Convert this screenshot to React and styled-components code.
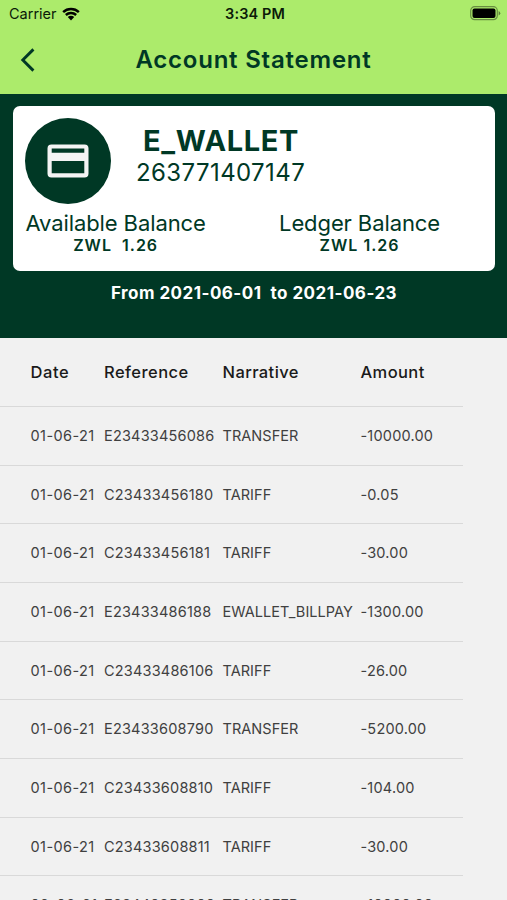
import React from 'react';
import styled, { createGlobalStyle } from 'styled-components';

const transactions = [
  { date: '01-06-21', reference: 'E23433456086', narrative: 'TRANSFER', amount: '-10000.00' },
  { date: '01-06-21', reference: 'C23433456180', narrative: 'TARIFF', amount: '-0.05' },
  { date: '01-06-21', reference: 'C23433456181', narrative: 'TARIFF', amount: '-30.00' },
  { date: '01-06-21', reference: 'E23433486188', narrative: 'EWALLET_BILLPAY', amount: '-1300.00' },
  { date: '01-06-21', reference: 'C23433486106', narrative: 'TARIFF', amount: '-26.00' },
  { date: '01-06-21', reference: 'E23433608790', narrative: 'TRANSFER', amount: '-5200.00' },
  { date: '01-06-21', reference: 'C23433608810', narrative: 'TARIFF', amount: '-104.00' },
  { date: '01-06-21', reference: 'C23433608811', narrative: 'TARIFF', amount: '-30.00' },
  { date: '02-06-21', reference: 'E23440350000', narrative: 'TRANSFER', amount: '-10000.00' },
];

const WifiIcon = () => (
  <svg width="18" height="14" viewBox="0 0 18 14">
    <path d="M0.3 4.2 A12.6 12.6 0 0 1 17.7 4.2 L16 6 A10 10 0 0 0 2 6 Z" />
    <path d="M3 7.1 A8.6 8.6 0 0 1 15 7.1 L13.3 8.9 A6.2 6.2 0 0 0 4.7 8.9 Z" />
    <path d="M5.8 10 A4.6 4.6 0 0 1 12.2 10 L9 13.4 Z" />
  </svg>
);

const BatteryIcon = () => (
  <svg width="31" height="15" viewBox="0 0 31 15">
    <rect x="0.7" y="0.7" width="26.6" height="13" rx="4" fill="none" stroke="#000" strokeOpacity="0.4" strokeWidth="1.2" />
    <rect x="2.5" y="2.5" width="23" height="9.4" rx="2" />
    <path d="M28.6 5 Q30.3 5.8 30.3 7.2 Q30.3 8.6 28.6 9.4 Z" fillOpacity="0.45" />
  </svg>
);

const BackIcon = () => (
  <svg width="16" height="24" viewBox="0 0 16 24" fill="none" stroke="#003825" strokeWidth="2.9">
    <path d="M13.4 1.4 L2.8 12 L13.4 22.6" />
  </svg>
);

const CardIcon = () => (
  <svg width="42" height="34" viewBox="0 0 42 34">
    <path
      fill="#f4f4f4"
      fillRule="evenodd"
      d="M4.5 0.4 H37.5 A4 4 0 0 1 41.5 4.4 V29.6 A4 4 0 0 1 37.5 33.6 H4.5 A4 4 0 0 1 0.5 29.6 V4.4 A4 4 0 0 1 4.5 0.4 Z M4.7 4.6 V8.7 H37.3 V4.6 Z M4.7 17 V29.3 H37.3 V17 Z"
    />
  </svg>
);

const App = () => {
  return (
    <Screen>
      <GlobalStyle />
      <StatusBar>
        <Carrier>
          Carrier
          <WifiIcon />
        </Carrier>
        <Clock>3:34 PM</Clock>
        <Battery>
          <BatteryIcon />
        </Battery>
      </StatusBar>
      <Header>
        <BackButton aria-label="Back">
          <BackIcon />
        </BackButton>
        <Title>Account Statement</Title>
      </Header>
      <Summary>
        <WalletCard>
          <CardTop>
            <IconCircle>
              <CardIcon />
            </IconCircle>
            <Account>
              <AccountName>E_WALLET</AccountName>
              <AccountNumber>263771407147</AccountNumber>
            </Account>
          </CardTop>
          <Balances>
            <Balance>
              <BalanceLabel>Available Balance</BalanceLabel>
              <BalanceValue>{'ZWL  1.26'}</BalanceValue>
            </Balance>
            <Balance>
              <BalanceLabel>Ledger Balance</BalanceLabel>
              <BalanceValue>ZWL 1.26</BalanceValue>
            </Balance>
          </Balances>
        </WalletCard>
        <Period>{'From 2021-06-01  to 2021-06-23'}</Period>
      </Summary>
      <Table>
        <HeadRow>
          <Cell $spacing={0.55}>Date</Cell>
          <Cell $spacing={0.45}>Reference</Cell>
          <Cell $spacing={0.4}>Narrative</Cell>
          <Cell $spacing={0.4}>Amount</Cell>
        </HeadRow>
        {transactions.map((item) => (
          <Row key={item.reference}>
            <Cell $spacing={0.42}>{item.date}</Cell>
            <Cell $spacing={0.2}>{item.reference}</Cell>
            <Cell $spacing={0.05}>{item.narrative}</Cell>
            <Cell $spacing={0.2}>{item.amount}</Cell>
          </Row>
        ))}
      </Table>
    </Screen>
  );
};

const GlobalStyle = createGlobalStyle`
  * {
    box-sizing: border-box;
  }
  body {
    margin: 0;
    overflow: hidden;
  }
`;

const Screen = styled.div`
  display: flex;
  flex-direction: column;
  width: 507px;
  height: 900px;
  overflow: hidden;
  background: #f1f1f1;
  color: #003825;
  font-family: Inter, 'Liberation Sans', sans-serif;
`;

const StatusBar = styled.div`
  flex: none;
  display: grid;
  grid-template-columns: 1fr auto 1fr;
  align-items: center;
  height: 27px;
  padding: 0 6px 0 9px;
  background: #aceb6b;
  color: #0b1a08;
  font-size: 14.5px;
`;

const Carrier = styled.div`
  display: flex;
  align-items: center;
  gap: 5px;
`;

const Clock = styled.div`
  font-weight: 600;
  letter-spacing: 0.1px;
`;

const Battery = styled.div`
  display: flex;
  justify-content: flex-end;
`;

// The empty third column keeps the title centred
const Header = styled.header`
  flex: none;
  display: grid;
  grid-template-columns: 40px 1fr 40px;
  align-items: center;
  height: 67px;
  padding: 0 20px 2px;
  background: #aceb6b;
`;

const BackButton = styled.button`
  display: flex;
  padding: 0;
  border: none;
  background: none;
`;

const Title = styled.h1`
  margin: 0;
  text-align: center;
  font-size: 24px;
  font-weight: 600;
  letter-spacing: 0.78px;
`;

const Summary = styled.section`
  flex: none;
  height: 244px;
  padding: 12px 12px 0 13px;
  background: #003825;
`;

const WalletCard = styled.div`
  height: 165px;
  padding: 12px;
  border-radius: 7px;
  background: #fff;
`;

const CardTop = styled.div`
  display: flex;
  gap: 25px;
`;

const IconCircle = styled.div`
  display: flex;
  align-items: center;
  justify-content: center;
  width: 86px;
  height: 86px;
  border-radius: 50%;
  background: #003825;
`;

const Account = styled.div`
  padding-top: 5px;
`;

const AccountName = styled.div`
  padding-left: 7px;
  font-size: 29px;
  font-weight: 700;
  line-height: 35px;
  letter-spacing: 0.65px;
`;

const AccountNumber = styled.div`
  font-size: 24px;
  line-height: 29px;
  letter-spacing: 0.4px;
`;

const Balances = styled.div`
  display: flex;
  justify-content: space-between;
  padding: 6px 43px 0 0.5px;
`;

const Balance = styled.div`
  text-align: center;
`;

const BalanceLabel = styled.div`
  font-size: 22px;
  line-height: 26px;
  letter-spacing: -0.1px;
`;

const BalanceValue = styled.div`
  font-size: 16px;
  font-weight: 600;
  line-height: 19px;
  letter-spacing: 1px;
  white-space: pre;
`;

const Period = styled.div`
  padding-top: 12px;
  color: #fff;
  text-align: center;
  font-size: 17px;
  font-weight: 700;
  line-height: 21px;
  letter-spacing: 0.47px;
  white-space: pre;
`;

const Table = styled.div`
  width: 463px;
`;

const Row = styled.div`
  display: grid;
  grid-template-columns: 73.5px 118.5px 138px 1fr;
  align-items: center;
  height: 58.67px;
  padding: 0 0 0.8px 30.5px;
  border-bottom: 1px solid #d9d9d9;
  color: #404040;
  font-size: 14.5px;
  white-space: nowrap;
`;

const HeadRow = styled(Row)`
  height: 69px;
  padding-bottom: 0;
  color: #1a1a1a;
  font-size: 16.5px;
  font-weight: 500;
`;

const Cell = styled.span`
  letter-spacing: ${({ $spacing }) => $spacing}px;
`;

export default App;
